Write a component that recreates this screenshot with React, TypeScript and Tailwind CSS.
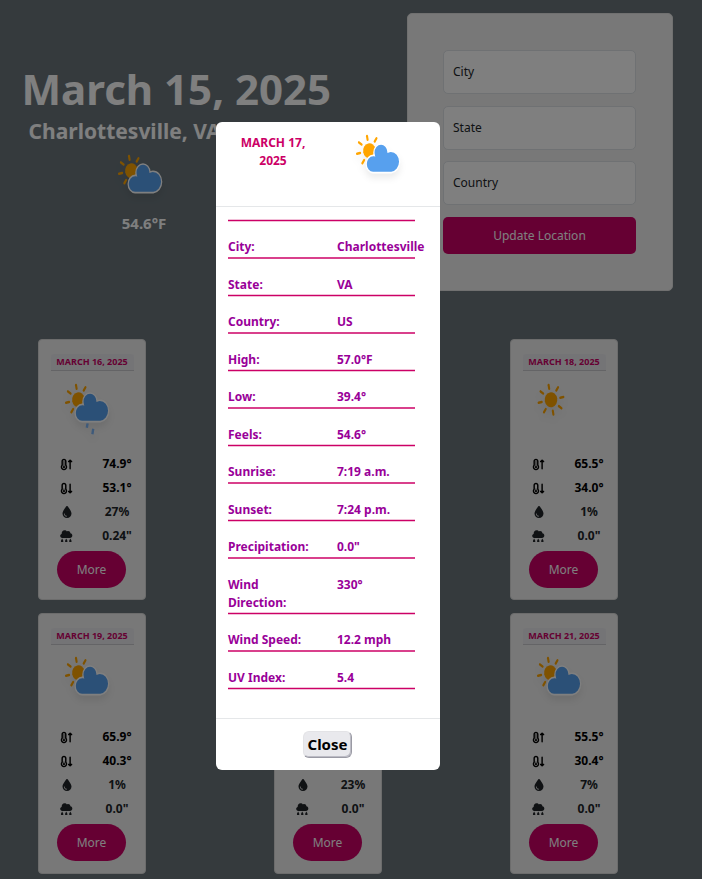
import { FaDroplet, FaTemperatureArrowDown, FaTemperatureArrowUp } from "react-icons/fa6";

type Kind = "cloudy" | "rain" | "sun";

const RAYS = [0, 45, 90, 135, 180, 225, 270, 315];

function WeatherIcon({ kind, className }: { kind: Kind; className?: string }) {
  const sunPlace = kind === "sun" ? "translate(20 20.8)" : "translate(19.4 20.8)";
  return (
    <svg width="68" height="70" viewBox="0 0 68 70" className={`block overflow-visible ${className ?? ""}`}>
      <g className="[filter:drop-shadow(0px_5px_3px_rgba(0,0,0,0.07))]">
        <g transform={`${sunPlace} scale(1.05 1.25) rotate(-11)`}>
          <circle r="6" fill="orange" />
          {RAYS.map((a) => (
            <line key={a} y1="-9" y2="-12" transform={`rotate(${a})`} stroke="orange" strokeWidth="2" strokeLinecap="round" />
          ))}
        </g>
        {kind !== "sun" && (
          <path
            transform="translate(-0.9 -13.74) scale(1.06 1.287)"
            d="M47.7,35.4c0-4.6-3.7-8.2-8.2-8.2c-1,0-1.9,0.2-2.8,0.5c-0.3-3.4-3.1-6.2-6.6-6.2c-3.7,0-6.7,3-6.7,6.7c0,0.8,0.2,1.6,0.4,2.3c-0.3-0.1-0.7-0.1-1-0.1c-3.7,0-6.7,3-6.7,6.7c0,3.6,2.9,6.6,6.5,6.7l17.2,0C44.2,43.3,47.7,39.8,47.7,35.4z"
            fill="#57A0EE"
            stroke="#fff"
            strokeWidth="1.2"
          />
        )}
        {kind === "rain" && (
          <g stroke="#7db4f5" strokeWidth="2.4">
            <line x1="28.6" y1="44.4" x2="27.8" y2="48.8" />
            <line x1="34.2" y1="49.8" x2="33.4" y2="55.2" />
          </g>
        )}
      </g>
    </svg>
  );
}

function CloudDrops({ size }: { size: number }) {
  return (
    <svg width={size} height={size} viewBox="0 0 38 38" fill="currentColor">
      <path d="M7 24C3 24 0.5 21.2 0.5 17.8C0.5 15 2.3 12.6 5 11.8C4.6 5.6 8.6 1 14 1C17 1 19.6 2.3 21.2 4.5C22.2 3.8 23.5 3.4 24.8 3.4C28.4 3.4 31.2 6 31.6 9.6C35.2 10.2 37.5 13.2 37.5 16.8C37.5 20.8 34.4 24 30.4 24Z" />
      {[6.5, 19, 31.5].map((x) => (
        <path key={x} transform={`translate(${x} 26)`} d="M0 0C1.2 2.8 3.6 5 3.6 8A3.6 3.6 0 0 1 -3.6 8C-3.6 5 -1.2 2.8 0 0Z" />
      ))}
    </svg>
  );
}

interface Day {
  date: string;
  kind: Kind;
  high: string;
  low: string;
  humidity: string;
  rain: string;
}

const DAYS: Day[] = [
  { date: "MARCH 16, 2025", kind: "rain", high: "74.9°", low: "53.1°", humidity: "27%", rain: '0.24"' },
  { date: "MARCH 17, 2025", kind: "cloudy", high: "57.0°", low: "39.4°", humidity: "2%", rain: '0.0"' },
  { date: "MARCH 18, 2025", kind: "sun", high: "65.5°", low: "34.0°", humidity: "1%", rain: '0.0"' },
  { date: "MARCH 19, 2025", kind: "cloudy", high: "65.9°", low: "40.3°", humidity: "1%", rain: '0.0"' },
  { date: "MARCH 20, 2025", kind: "cloudy", high: "61.2°", low: "42.1°", humidity: "23%", rain: '0.0"' },
  { date: "MARCH 21, 2025", kind: "cloudy", high: "55.5°", low: "30.4°", humidity: "7%", rain: '0.0"' },
];

function DayCard({ day, lower }: { day: Day; lower: boolean }) {
  const rows = [
    { icon: <FaTemperatureArrowUp size={13} />, value: day.high, tone: "text-black" },
    { icon: <FaTemperatureArrowDown size={13} />, value: day.low, tone: "text-black" },
    { icon: <FaDroplet size={12} />, value: day.humidity, tone: "text-[#212529]" },
    { icon: <CloudDrops size={12.5} />, value: day.rain, tone: "text-[#212529]" },
  ];
  return (
    <div className="flex h-[261px] w-[108px] flex-col items-center rounded-[4px] border border-[#d8d8d8] bg-[#f0f0f0] pt-[14px]">
      <div className="flex h-[17px] w-[83px] items-center justify-center rounded-t-[3px] border-b border-[#c8c8cc] bg-[#e9e9ed] text-[9px] font-bold whitespace-nowrap text-[#cc0066]">
        {day.date}
      </div>
      <div className={`ml-[2px] h-[73px] w-[68px] ${lower ? "mt-[7px]" : "mt-[8px]"}`}>
        <WeatherIcon kind={day.kind} />
      </div>
      <div className="flex w-full flex-col">
        {rows.map(({ icon, value, tone }, i) => (
          <div key={i} className={`flex h-6 items-center text-[12px] font-bold ${tone}`}>
            <div className="ml-[19px] flex w-[17px] justify-center">{icon}</div>
            <div className="ml-[22px] w-[40px] text-center">{value}</div>
          </div>
        ))}
      </div>
      <button className="mt-[3px] mr-px h-[37px] w-[69px] rounded-full bg-[#cc0066] text-[12px] text-white">More</button>
    </div>
  );
}

const DETAILS: { label: string; value: string; height: string }[] = [
  { label: "City:", value: "Charlottesville", height: "h-[38px]" },
  { label: "State:", value: "VA", height: "h-[37px]" },
  { label: "Country:", value: "US", height: "h-[38px]" },
  { label: "High:", value: "57.0°F", height: "h-[37px]" },
  { label: "Low:", value: "39.4°", height: "h-[38px]" },
  { label: "Feels:", value: "54.6°", height: "h-[37px]" },
  { label: "Sunrise:", value: "7:19 a.m.", height: "h-[38px]" },
  { label: "Sunset:", value: "7:24 p.m.", height: "h-[37px]" },
  { label: "Precipitation:", value: '0.0"', height: "h-[38px]" },
  { label: "Wind Direction:", value: "330°", height: "h-[55px]" },
  { label: "Wind Speed:", value: "12.2 mph", height: "h-[38px]" },
  { label: "UV Index:", value: "5.4", height: "h-[37px]" },
];

// A 1.5px rule, drawn on whole pixels: either centred on one row or spread over two.
function Rule({ centred }: { centred: boolean }) {
  return (
    <div className="h-[3px] w-[187px] shrink-0">
      {centred ? (
        <>
          <div className="h-px bg-[#cc0066]/25" />
          <div className="h-px bg-[#cc0066]" />
          <div className="h-px bg-[#cc0066]/25" />
        </>
      ) : (
        <div className="h-[2px] bg-[#cc0066]/75" />
      )}
    </div>
  );
}

function Modal() {
  return (
    <div className="flex h-[648px] w-[224px] flex-col rounded-[6px] bg-white">
      <div className="flex h-[85px] shrink-0 border-b border-[#e5e7e9]">
        <h5 className="mt-[12px] ml-[13px] w-[88px] text-center text-[12px] leading-[18px] font-bold text-[#cc0066]">
          MARCH 17, 2025
        </h5>
        <div className="mt-[8px] ml-[33px] h-[70px] w-[68px]">
          <WeatherIcon kind="cloudy" />
        </div>
      </div>
      <div className="h-[512px] shrink-0 border-b border-[#e5e7e9] pt-[12px] pl-[12px] text-[12px] leading-[18px] font-bold text-[#990099]">
        <Rule centred />
        {DETAILS.map((d, i) => (
          <div key={d.label} className={`flex flex-col justify-end ${d.height}`}>
            <div className={`flex ${i % 2 === 0 ? "mb-px" : ""}`}>
              <div className="w-[84px]">{d.label}</div>
              <div className="ml-[25px] whitespace-nowrap">{d.value}</div>
            </div>
            <Rule centred={i % 2 === 1} />
          </div>
        ))}
      </div>
      <div className="flex flex-1 justify-center pt-[12px] pr-px">
        <button className="h-[27px] w-[49px] rounded-[6px] border border-t-[#e3e3e6] border-r-[#9a9aa4] border-b-[#9a9aa4] border-l-[#e3e3e6] bg-[#e9e9ed] text-[15px] leading-none font-bold text-black shadow-[inset_-1px_-1px_0_rgba(143,143,157,0.5)]">
          Close
        </button>
      </div>
    </div>
  );
}

function Field({ label, className }: { label: string; className: string }) {
  return (
    <div className={`flex h-[44px] items-center rounded-[5px] border border-[#dee2e6] bg-white pl-[9px] text-[12px] text-[#212529] ${className}`}>
      {label}
    </div>
  );
}

export default function App() {
  return (
    <div className="relative h-[879px] w-[702px] overflow-hidden bg-[#6a757b] font-['Noto_Sans',sans-serif]">
      <div className="flex pt-[13px]">
        <div className="flex w-[288px] flex-col items-center pt-[46px] text-white">
          <h1 className="w-full pl-[21.5px] text-[42px] leading-[60px] font-bold whitespace-nowrap">March 15, 2025</h1>
          <h2 className="text-[21px] leading-[25px] font-bold whitespace-nowrap">Charlottesville, VA, US</h2>
          <WeatherIcon kind="cloudy" className="mt-[6px] ml-[3px]" />
          <p className="-mt-[8px] text-[15px] leading-[22px] font-bold">54.6°F</p>
        </div>
        <div className="ml-[119px] flex h-[278px] w-[266px] flex-col rounded-[5px] border border-[#e0e0e0] bg-[#f0f0f0] pt-[36px] pr-[36px] pl-[35px]">
          <Field label="City" className="" />
          <Field label="State" className="mt-[12px]" />
          <Field label="Country" className="mt-[11px]" />
          <button className="mt-[12px] h-[37px] rounded-[5px] bg-[#cc0066] text-[12px] text-white">Update Location</button>
        </div>
      </div>
      <div className="mt-[48px] ml-[38px] grid grid-cols-[236px_236px_108px] gap-y-[13px]">
        {DAYS.map((d, i) => (
          <DayCard key={d.date} day={d} lower={i > 2} />
        ))}
      </div>
      <div className="absolute inset-0 bg-black/50 pt-[122px] pl-[216px]">
        <Modal />
      </div>
    </div>
  );
}
